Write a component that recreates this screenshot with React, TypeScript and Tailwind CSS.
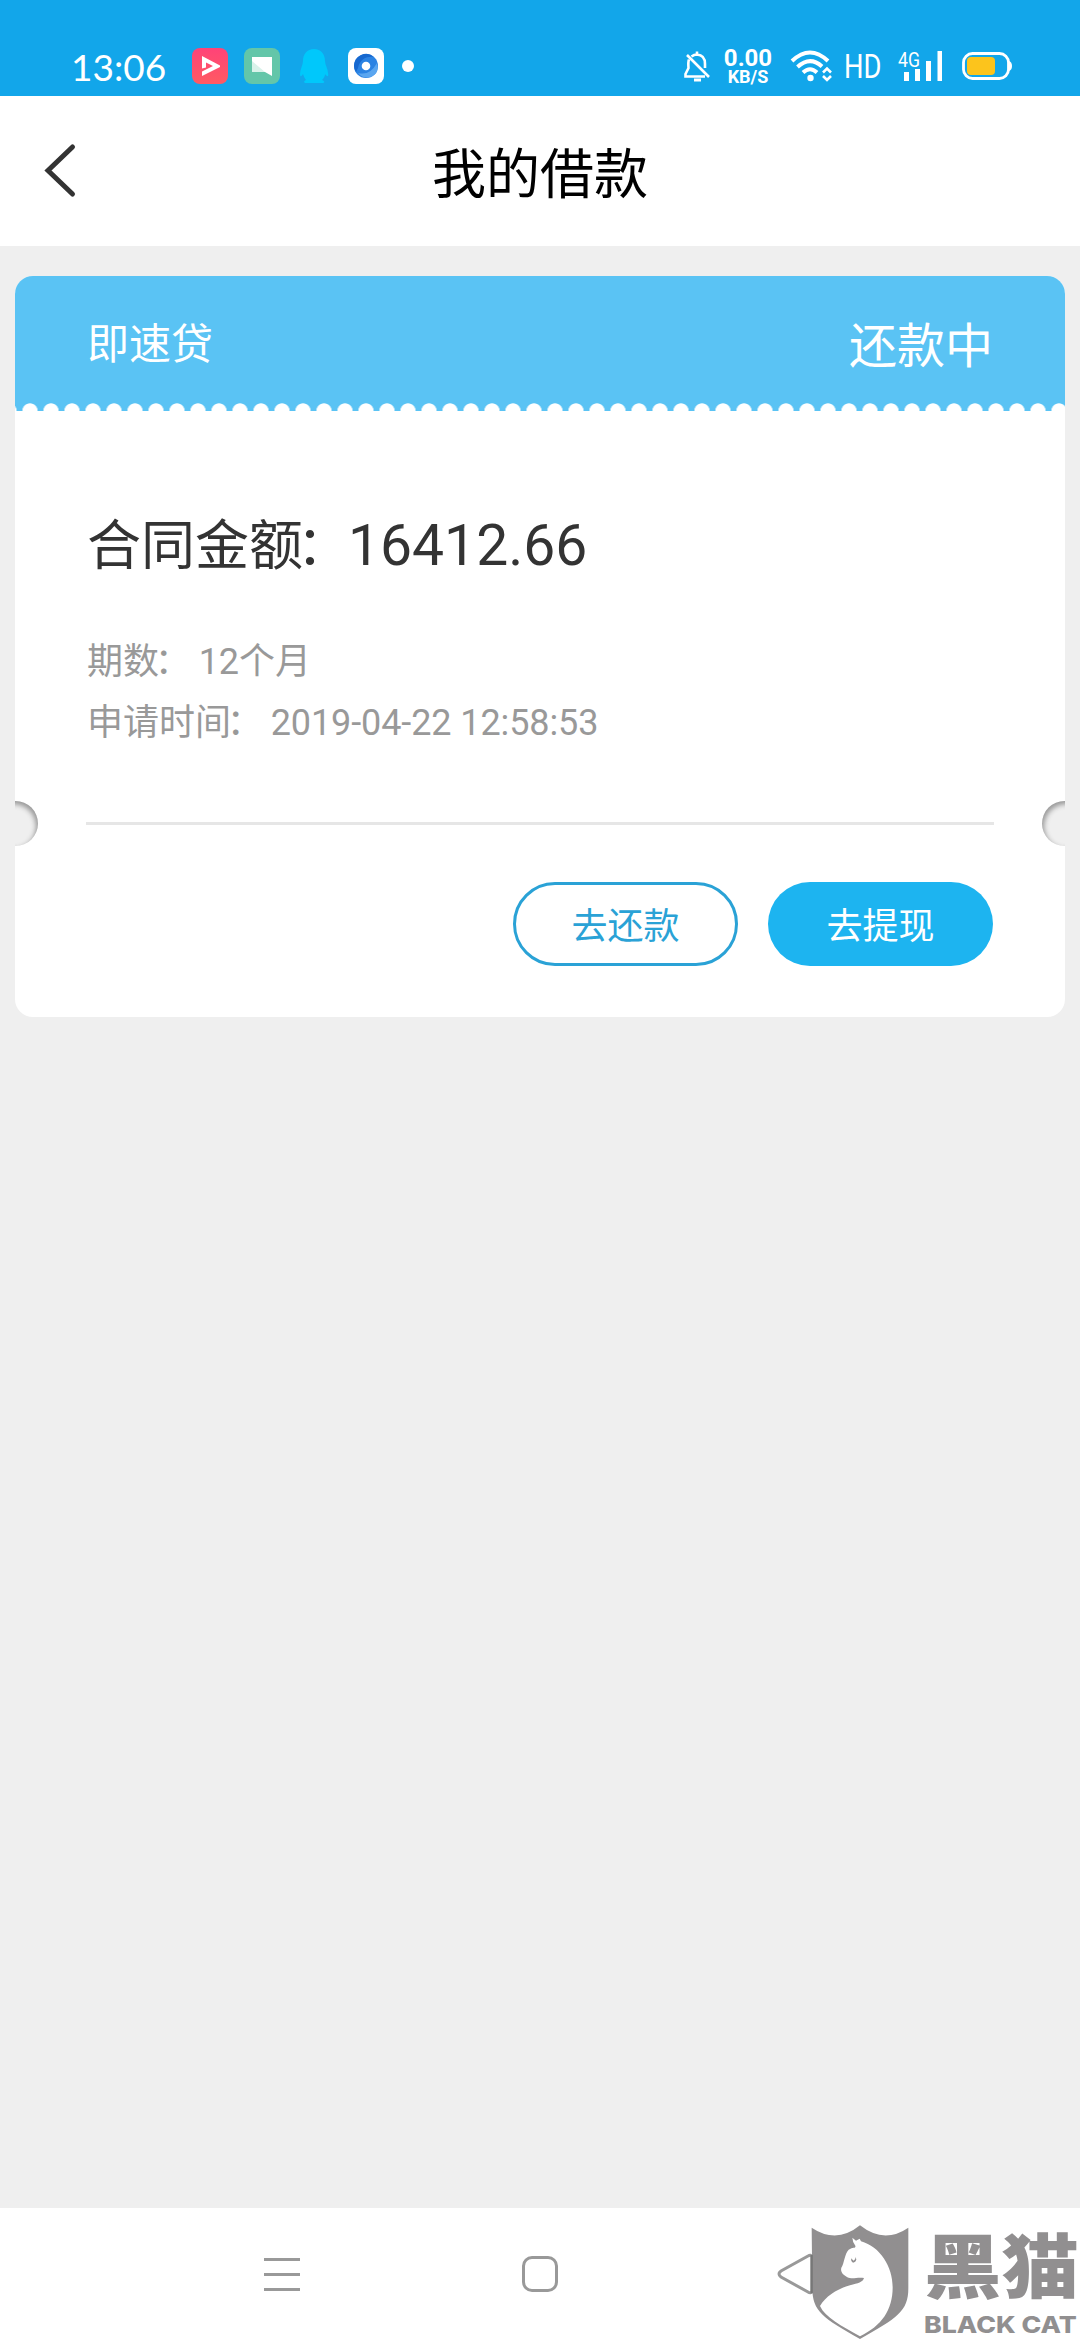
import type { ReactNode } from 'react';

interface Loan {
  name: string;
  status: string;
  amount: string;
  details: { label: string; value: string }[];
}

const loan: Loan = {
  name: '即速贷',
  status: '还款中',
  amount: '16412.66',
  details: [
    { label: '期数', value: '12个月' },
    { label: '申请时间', value: '2019-04-22 12:58:53' },
  ],
};

function NotificationIcons() {
  return (
    <div className="flex items-center">
      <svg className="ml-[28px] h-9 w-9" viewBox="0 0 36 36">
        <defs>
          <linearGradient id="pink" x1="0" y1="0" x2="0" y2="1">
            <stop offset="0" stopColor="#ff4378" />
            <stop offset="1" stopColor="#ff5a62" />
          </linearGradient>
        </defs>
        <rect width="36" height="36" rx="8" fill="url(#pink)" />
        <path d="M10 8L28 17.500V19L10 28V23.500L21 18L14 14.500V19.500L10 20.500Z" fill="#fff" />
      </svg>
      <svg className="ml-4 h-9 w-9" viewBox="0 0 36 36">
        <rect width="36" height="36" rx="8" fill="#63c6a9" />
        <path d="M8 9h20v19l-7-4H8z" fill="#fff" />
        <path d="M8 13L21 24H8z" fill="#d9f2ea" />
      </svg>
      <svg className="ml-[19px] h-9 w-[30px]" viewBox="0 0 30 36">
        <path
          d="M15 1C8 1 4 6 4 13C4 17 1 21 1 26C1 30 3 28 4 26C5 29 6 31 7 32C4 33 5 35 7 35H23C26 35 26 33 23 32C25 30 26 28 26 26C28 29 30 29 29 25C29 21 26 17 26 13C26 6 22 1 15 1Z"
          fill="#00c8fb"
        />
      </svg>
      <svg className="ml-[19px] h-9 w-9" viewBox="0 0 36 36">
        <rect width="36" height="36" rx="8" fill="#fff" />
        <circle cx="18" cy="18" r="12" fill="#2b83e3" />
        <path d="M6 18A12 12 0 0 1 26 9C20 8 12 10 10 20L8 24Q6 21 6 18Z" fill="#1668cf" />
        <path d="M10 25Q22 28 29 15Q32 26 22 29Q15 31 10 25Z" fill="#5aa6f0" />
        <circle cx="18" cy="18" r="4.3" fill="#fff" />
      </svg>
      <span className="ml-[18px] h-3 w-3 rounded-full bg-white" />
    </div>
  );
}

function StatusBar() {
  return (
    <div className="flex h-24 items-start bg-[#12a6ea] pt-12 text-white">
      <div className="flex h-9 w-full items-center justify-between pr-[68px] pl-[71px]">
        <div className="flex items-center">
          <span className="w-[93px] pt-0.5 font-[family-name:Lato] text-[37px] leading-9 whitespace-nowrap">13:06</span>
          <NotificationIcons />
        </div>
        <div className="flex items-center">
          <svg className="h-9 w-[28px]" viewBox="0 0 28 36" fill="none" stroke="#fff" strokeWidth="2.6">
            <path d="M8.500 8.500Q11 6.500 14 6.500Q22 7 22 16V20M14 6.500V3.500M6 11.500Q5 14 5.500 20L2.500 26V28.500H22M4 7L26 29" />
            <path d="M11 32h7" strokeWidth="3" />
          </svg>
          <div className="ml-[13px] flex w-[48px] flex-col items-center font-bold">
            <span className="text-[24px] leading-[20px]">0.00</span>
            <span className="text-[18px] leading-[17px]">KB/S</span>
          </div>
          <svg className="ml-[18px] h-9 w-[43px]" viewBox="0 0 43 36" fill="none" stroke="#fff" strokeWidth="4">
            <path d="M2 13Q20 -4 38 13M7.500 19Q20 7.500 32 18.500M13 24.500Q20 18 27 24.500" />
            <circle cx="20.500" cy="30" r="3.200" fill="#fff" stroke="none" />
            <path d="M33 24.500L37 20.500L41 24.500M33 28L37 32L41 28" strokeWidth="2.600" />
          </svg>
          <span className="ml-[11px] w-[37px] origin-left scale-x-[0.83] pt-0.5 text-[33px] leading-9">HD</span>
          <div className="relative ml-[17px] h-9 w-[46px]">
            <span className="absolute top-0.5 left-0 origin-left scale-x-[0.88] text-[20px] leading-5">4G</span>
            <svg className="h-9 w-[46px]" viewBox="0 0 46 36" fill="#fff">
              <rect x="6" y="24" width="5" height="9" />
              <rect x="17" y="21" width="5" height="12" />
              <rect x="28" y="13" width="5" height="20" />
              <rect x="39.500" y="3" width="4.500" height="30" />
            </svg>
          </div>
          <svg className="ml-[18px] h-9 w-[50px]" viewBox="0 0 50 36">
            <rect x="1.500" y="5.500" width="45" height="25" rx="9" fill="none" stroke="#fff" strokeWidth="2.800" />
            <path d="M47 13Q50 14 50 18Q50 22 47 23Z" fill="#fff" />
            <rect x="5" y="9" width="28" height="18" rx="4" fill="#fcc41c" />
          </svg>
        </div>
      </div>
    </div>
  );
}

function PageHeader({ title }: { title: string }) {
  return (
    <header className="relative flex h-[150px] items-center justify-center bg-white">
      <button className="absolute top-[47px] left-[42px]">
        <svg width="36" height="56" viewBox="0 0 36 56">
          <path d="M30.500 4L6 27.500L30.500 51" fill="none" stroke="#333" strokeWidth="5" strokeLinecap="round" />
        </svg>
      </button>
      <h1 className="pt-[10px] text-[54px] leading-[60px] text-black">{title}</h1>
    </header>
  );
}

function LoanButton({ filled, children }: { filled?: boolean; children: ReactNode }) {
  return (
    <button
      className={
        filled
          ? 'h-[84px] w-[225px] rounded-full bg-[#1db4f0] pt-1.5 text-4xl text-white'
          : 'h-[84px] w-[225px] rounded-full border-3 border-[#2aa2d6] pt-1.5 text-4xl text-[#2aa2d6]'
      }
    >
      {children}
    </button>
  );
}

function Colon() {
  return <span className="-ml-[0.12em]">：</span>;
}

function LoanCard({ data }: { data: Loan }) {
  return (
    <section className="relative mx-[15px] mt-[30px] h-[741px] overflow-hidden rounded-[18px] bg-white">
      <div className="h-[135px] bg-[#5ac3f4]">
        <div className="flex h-[127px] items-center justify-between px-[72px] pt-3 text-white">
          <span className="pb-0.5 text-[42px]">{data.name}</span>
          <span className="pt-0.5 text-5xl">{data.status}</span>
        </div>
        <div className="h-2 bg-[radial-gradient(circle_at_10.5px_8px,#fff_7.3px,transparent_8px)] bg-[length:21px_8px] bg-[position:4.5px_0]" />
      </div>

      <div className="px-[72px]">
        <div className="mt-[105px] flex h-[60px] items-baseline leading-[60px] text-[#333]">
          <span className="w-[261px] text-[54px] whitespace-nowrap">
            合同金额
            <Colon />
          </span>
          <span className="text-[57px]">{data.amount}</span>
        </div>
        <div className="mt-[56px] text-4xl text-[#999]">
          {data.details.map(({ label, value }) => (
            <p key={label} className="flex leading-[61px]">
              <span>{label}</span>
              <Colon />
              <span className="ml-[8px] tracking-[-0.1px]">{value}</span>
            </p>
          ))}
        </div>
        <div className="-mx-px mt-[68px] h-[3px] bg-[#e6e6e6]" />
        <div className="mt-[57px] flex justify-end gap-[30px]">
          <LoanButton>去还款</LoanButton>
          <LoanButton filled>去提现</LoanButton>
        </div>
      </div>

      {/* ticket notches on both edges */}
      <span className="absolute top-[525px] -left-[22px] h-[45px] w-[45px] rounded-full bg-[#efefef] shadow-[inset_-2px_3px_5px_#999]" />
      <span className="absolute top-[525px] -right-[22px] h-[45px] w-[45px] rounded-full bg-[#efefef] shadow-[inset_2px_3px_5px_#999]" />
    </section>
  );
}

function NavigationBar() {
  return (
    <nav className="relative flex h-[132px] items-start bg-white pt-12">
      <svg className="ml-[264px]" width="36" height="36" viewBox="0 0 36 36" fill="#999">
        <rect y="2" width="36" height="3" />
        <rect y="17" width="36" height="3" />
        <rect y="32" width="36" height="3" />
      </svg>
      <span className="ml-[222px] h-9 w-9 rounded-[10px] border-3 border-[#999]" />
      <svg className="-mt-1 ml-[219px]" width="38" height="44" viewBox="0 0 38 44">
        <path d="M35 5Q34 2 31 4L4 19Q0 22 4 25L31 40Q34 42 35 39Z" fill="none" stroke="#999" strokeWidth="3" />
      </svg>

      <div className="absolute right-0 bottom-0 flex h-[117px] w-[270px] text-[#918f90]">
        <svg width="100" height="117" viewBox="210 69 300 351">
          <path
            d="M215 83Q290 133 360 76Q432 133 505 83V265C505 335 470 355 360 417C250 355 217 335 217 265Z"
            fill="currentColor"
          />
          <path
            d="M337 113L348 122L359 116L363 124C420 140 458 200 458 262C458 330 425 378 360 409C305 378 255 352 240 318C258 288 290 267 330 256C355 249 368 247 372 234C350 231 338 239 322 232C312 226 300 218 304 203C313 190 314 160 326 149C340 140 348 146 346 137Q338 128 337 113Z"
            fill="#fff"
          />
          <path d="M333 175L341 182Q348 178 346 171L349 178Q347 188 339 188Q332 184 333 175Z" fill="currentColor" />
          <path d="M215 165V280" stroke="#777" strokeWidth="7" />
        </svg>
        <div className="ml-[14px] flex flex-col items-start">
          <span className="mt-[8px] origin-left scale-x-[1.02] scale-y-[0.93] text-[76px] leading-[76px] font-black whitespace-nowrap">
            黑猫
          </span>
          <span className="mt-[6px] origin-left scale-x-[1.16] font-[family-name:Inter] text-[23px] leading-6 font-extrabold whitespace-nowrap">
            BLACK CAT
          </span>
        </div>
      </div>
    </nav>
  );
}

export default function App() {
  return (
    <div
      lang="zh-CN"
      className="flex h-[2340px] w-[1080px] flex-col overflow-hidden bg-[#efefef] font-[family-name:Roboto,'Noto_Sans_CJK_SC',sans-serif]"
    >
      <StatusBar />
      <PageHeader title="我的借款" />
      <main className="flex-1">
        <LoanCard data={loan} />
      </main>
      <NavigationBar />
    </div>
  );
}
